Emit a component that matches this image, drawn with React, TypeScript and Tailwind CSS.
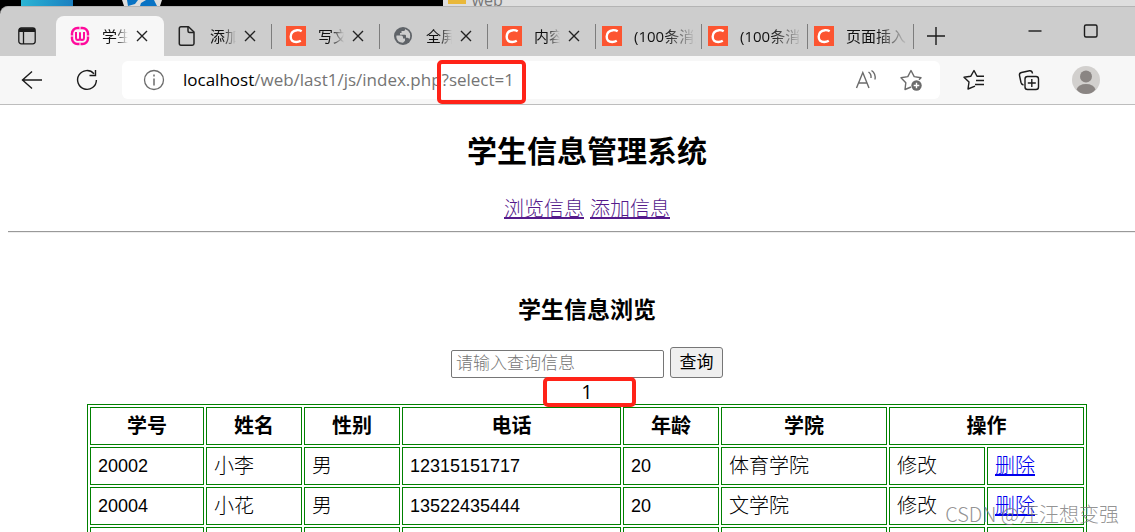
import type { ReactNode } from 'react'

type Icon = 'wamp' | 'file' | 'csdn' | 'globe'

const tabs: { title: string; icon: Icon; active?: boolean; wide?: boolean }[] = [
  { title: '学生信息', icon: 'wamp', active: true },
  { title: '添加信息', icon: 'file' },
  { title: '写文章', icon: 'csdn' },
  { title: '全屏显示', icon: 'globe' },
  { title: '内容管理', icon: 'csdn' },
  { title: '(100条消息', icon: 'csdn', wide: true },
  { title: '(100条消息', icon: 'csdn', wide: true },
  { title: '页面插入', icon: 'csdn', wide: true },
]

const students = [
  { id: '20002', name: '小李', sex: '男', phone: '12315151717', age: '20', college: '体育学院' },
  { id: '20004', name: '小花', sex: '男', phone: '13522435444', age: '20', college: '文学院' },
]

function TabIcon({ icon }: { icon: Icon }) {
  if (icon === 'wamp') {
    return (
      <svg className="size-5 shrink-0" viewBox="0 0 20 20" fill="none" stroke="#ff0a9c" strokeLinejoin="round">
        <rect x="2" y="2" width="16" height="16" rx="5.5" strokeWidth="2.4" />
        <path d="M6 6v5.5Q6 14 8 14t2-2.500V7v4.500Q10 14 12 14t2-2.500V6" strokeWidth="2" />
        <path d="M10 0v3.500M10 16.500V20M0 10h3.500M16.500 10H20" stroke="#f7f7f7" strokeWidth="1" />
      </svg>
    )
  }
  if (icon === 'file') {
    return (
      <svg className="size-5 shrink-0" viewBox="0 0 20 20" fill="none" stroke="#222" strokeWidth="1.5" strokeLinejoin="round">
        <path d="M3 .8h7.500L16 6v11.500q0 1.700-1.700 1.700H3q-1.700 0-1.700-1.700v-15Q1.300.8 3 .8Z" />
        <path d="M10 1v4q0 1.500 1.500 1.500H16" />
      </svg>
    )
  }
  if (icon === 'globe') {
    return (
      <svg className="size-5 shrink-0" viewBox="0 0 20 20">
        <circle cx="9" cy="10" r="9" fill="#5f6368" />
        <path
          d="M2.500 9.500h4.800q1.700.2 1.700 1.800v1.200h2v2.200l-2 2Q3 16.800 2.300 11ZM11 3q.5 1.500-1 2H7.500v2H6v1.800h5q1 0 1 1v2h1.500q1.500.4 1.700 1.600Q16.800 11 16 7.500 14.700 4.300 11 3Z"
          fill="#cdcdcd"
        />
      </svg>
    )
  }
  return (
    <svg className="size-5 shrink-0" viewBox="0 0 20 20" fill="none">
      <rect width="20" height="20" fill="#fc5531" />
      <path d="M15.700 5.300Q13.500 4 11 4.200 5 4.700 4.700 10.500 4.600 16 10.200 16q2.500 0 4.600-1.200" stroke="#fff" strokeWidth="2.400" />
    </svg>
  )
}

function IconButton({ label, className, children }: { label: string; className: string; children: ReactNode }) {
  return (
    <button type="button" aria-label={label} className={`flex shrink-0 items-center justify-center ${className}`}>
      <svg className="size-6" viewBox="0 0 24 24" fill="none" stroke="currentColor" strokeWidth="1.400">
        {children}
      </svg>
    </button>
  )
}

function TabStrip() {
  return (
    <div className="flex h-[50px] items-end rounded-tl-lg border-t border-[#b4b4b4] bg-[#cdcdcd]">
      <button type="button" aria-label="标签页操作" className="flex h-10 w-14 shrink-0 items-center pl-[18px]">
        <svg className="h-[18px] w-[18px]" viewBox="0 0 18 18" fill="none" stroke="#1b1b1b" strokeWidth="1.300">
          <rect x=".8" y="1" width="16.400" height="15.800" rx="2.500" />
          <path d="M1 3.800h16M1 2.600h16" strokeWidth="2.600" />
          <path d="M5.500 5v12" />
        </svg>
      </button>
      {tabs.map((tab, i) => (
        <div
          key={i}
          className={`flex h-10 shrink-0 items-center ${tab.wide ? 'w-[106px] pl-[6px]' : 'w-[108px] pl-[14px]'} ${
            tab.active ? 'rounded-t-lg bg-[#f7f7f7]' : ''
          }`}
        >
          <TabIcon icon={tab.icon} />
          <span
            className={`ml-3 overflow-hidden text-[15px] whitespace-nowrap text-[#111] [mask-image:linear-gradient(to_right,black_50%,transparent)] ${
              tab.wide ? 'w-[62px]' : 'w-[26px]'
            }`}
          >
            {tab.title}
          </span>
          {!tab.wide && (
            <button type="button" aria-label="关闭标签页" className="ml-[6px] flex size-4 items-center justify-center">
              <svg className="size-3" viewBox="0 0 12 12" stroke="#222" strokeWidth="1.400">
                <path d="M1 1l10 10M11 1L1 11" />
              </svg>
            </button>
          )}
          {!tab.active && <span className="ml-auto h-[25px] w-px bg-[#7d7d7d]" />}
        </div>
      ))}
      <IconButton label="新建标签页" className="h-10 w-11 text-[#1b1b1b]">
        <path d="M12 3v18M3 12h18" />
      </IconButton>
      <div className="ml-auto flex h-[50px] items-center">
        <IconButton label="最小化" className="w-14 text-[#1b1b1b]">
          <path d="M5.500 12h13" />
        </IconButton>
        <IconButton label="最大化" className="mr-4 w-14 text-[#1b1b1b]">
          <rect x="5.500" y="6" width="12.500" height="12" rx="1.500" />
        </IconButton>
      </div>
    </div>
  )
}

function AddressBar() {
  return (
    <div className="flex h-[49px] items-center border-b border-[#bdbdbd] bg-[#f7f7f7] text-[#1b1b1b]">
      <IconButton label="返回" className="ml-5">
        <path d="M2 12h20M12 3.500L2.500 12l9.500 8.500" />
      </IconButton>
      <IconButton label="刷新" className="ml-[31px]">
        <path d="M19 5.700A9.400 9.400 0 1 0 21.400 12M14.500 7.500h6V2" />
      </IconButton>
      <div className="ml-[23px] flex h-[38px] grow items-center rounded-md bg-white">
        <svg className="ml-5 size-6 shrink-0" viewBox="0 0 24 24" fill="none" stroke="#6b6b6b" strokeWidth="1.300">
          <circle cx="12" cy="12" r="9.500" />
          <path d="M12 10.500v7M12 6.500v2" strokeWidth="1.500" />
        </svg>
        <span className="ml-[17px] grow text-[17px] leading-6 text-[#747474]">
          <span className="text-black">localhost</span>/web/last1/js/index.php?select=1
        </span>
        <IconButton label="大声朗读" className="text-[#6b6b6b]">
          <path d="M2.500 20L8.800 4.500 15 20M4.600 15h8.300M14.500 4q3 2 2.500 6M17.500 2.500q4.500 3 3.500 9" />
        </IconButton>
        <IconButton label="收藏此页" className="mr-[17px] ml-[21px] text-[#6b6b6b]">
          <path d="M12 19L6 21.500l.8-6.700L2 9.800l6.800-1.200L12 2.500l3.200 6.100L22 9.800l-2 2" strokeLinejoin="round" />
          <circle cx="17.500" cy="17.500" r="5.200" fill="#6b6b6b" stroke="none" />
          <path d="M17.500 14.700v5.600M14.700 17.500h5.600" stroke="#fff" />
        </IconButton>
      </div>
      <IconButton label="收藏夹" className="ml-[22px]">
        <path d="M13 18.200L6 21l1-7-5-4.800L8.700 8.300 12 2.500l3 5.800h7M14 12.500h8M13 16.500h9" strokeLinejoin="round" />
      </IconButton>
      <IconButton label="集锦" className="ml-[31px]">
        <rect x="8" y="8.500" width="13.500" height="13" rx="2.500" />
        <path d="M6.500 17Q4.500 16.500 4 14.500L2.500 7.500Q2 5 4.500 4.500l8-1.700Q15 2.500 15.500 5.500M14.800 11v8M10.800 15h8" />
      </IconButton>
      <button type="button" aria-label="个人资料" className="mr-[35px] ml-[31px] shrink-0">
        <svg className="size-7" viewBox="0 0 28 28">
          <circle cx="14" cy="14" r="14" fill="#d2d0ce" />
          <circle cx="14" cy="10.500" r="6" fill="#8a8583" />
          <path d="M4.500 23.500Q6.500 18 14 18t9.500 5.500Q20 28 14 28t-9.500-4.500Z" fill="#8a8583" />
        </svg>
      </button>
    </div>
  )
}

function StudentTable() {
  const cell = 'h-[38px] border border-[#008000] px-[7px] py-0'
  return (
    <table className="w-[1000px] table-fixed border-separate border-spacing-[2px] border border-[#008000] text-left text-xl">
      <colgroup>
        <col className="w-[114px]" />
        <col className="w-[96px]" />
        <col className="w-[96px]" />
        <col className="w-[219px]" />
        <col className="w-[96px]" />
        <col className="w-[166px]" />
        <col className="w-[96px]" />
        <col />
      </colgroup>
      <thead>
        <tr>
          {['学号', '姓名', '性别', '电话', '年龄', '学院'].map((head) => (
            <th key={head} className={`${cell} text-center leading-6`}>{head}</th>
          ))}
          <th colSpan={2} className={`${cell} text-center leading-6`}>操作</th>
        </tr>
      </thead>
      <tbody className="leading-6 font-light">
        {students.map((s) => (
          <tr key={s.id}>
            <td className={`${cell} text-lg`}>{s.id}</td>
            <td className={cell}>{s.name}</td>
            <td className={cell}>{s.sex}</td>
            <td className={`${cell} text-lg`}>{s.phone}</td>
            <td className={`${cell} text-lg`}>{s.age}</td>
            <td className={cell}>{s.college}</td>
            <td className={cell}>修改</td>
            <td className={cell}>
              <a href="#delete" className="text-[#0000ee] underline">删除</a>
            </td>
          </tr>
        ))}
        <tr>
          {Array.from({ length: 8 }, (_, i) => (
            <td key={i} className={cell} />
          ))}
        </tr>
      </tbody>
    </table>
  )
}

export default function App() {
  return (
    <div className="relative h-screen overflow-hidden bg-white font-['Liberation_Sans','Noto_Sans_CJK_SC',sans-serif] text-black">
      <header className="relative bg-black font-['Open_Sans','Noto_Sans_CJK_SC',sans-serif]">
        {/* Sliver of the desktop above the browser */}
        <div className="flex h-[6px] overflow-hidden">
          <div className="ml-[21px] w-[52px] bg-gradient-to-r from-[#2bb5d4] to-[#1b7fc0]" />
          <svg className="ml-[49px] h-[6px] w-10" viewBox="0 0 40 6">
            <path d="M0 0h40l-2 6H2Z" fill="#ddd" />
            <path d="M5 0h11l-3 4-7 2ZM19 3l5-3h8l3 6H18Z" fill="#0873c4" />
          </svg>
          <div className="ml-auto flex w-[61%] bg-[#dedede]">
            <span className="ml-[5px] h-1 w-[18px] bg-[#e9b83a]" />
            <span className="ml-[6px] text-base leading-[0px] text-[#777]">web</span>
          </div>
        </div>
        <TabStrip />
        <AddressBar />
        <span className="absolute top-[60px] left-[437px] h-11 w-[89px] rounded-[5px] border-4 border-[#ff2318]" />
      </header>

      <main>
        <div className="flex flex-col items-center pt-6 pl-[39px]">
          <h1 className="text-3xl leading-[46px] font-bold">学生信息管理系统</h1>
          <nav className="mt-[18px] flex gap-[6px] text-xl leading-8 font-light text-[#551a8b] underline">
            <a href="#list">浏览信息</a>
            <a href="#add">添加信息</a>
          </nav>
        </div>
        <hr className="mt-[6px] ml-2 h-[2px] border-t border-b border-t-[#999] border-b-[#eee]" />
        <div className="flex flex-col items-center pt-[61px] pl-[39px]">
          <h2 className="text-[23px] leading-8 font-bold">学生信息浏览</h2>
          <form className="mt-[21px] flex items-end gap-[6px] text-[17px]">
            <input
              type="text"
              aria-label="查询信息"
              placeholder="请输入查询信息"
              className="h-7 w-[213px] rounded-xs border border-[#767676] px-1 font-light placeholder:text-[#757575]"
            />
            <button type="button" className="h-[31px] w-[53px] rounded-[3px] border border-[#767676] bg-[#efefef]">
              查询
            </button>
          </form>
          <p className="relative h-[26px] font-['Open_Sans',sans-serif] text-xl leading-[27px]">
            1
            <span className="absolute -top-px left-1/2 h-[30px] w-[93px] -translate-x-[44px] rounded-[5px] border-4 border-[#ff2318]" />
          </p>
          <StudentTable />
        </div>
      </main>

      <span className="absolute right-4 bottom-1 font-['Noto_Sans_CJK_SC',sans-serif] text-xl leading-7 font-light text-[#777]/80">
        CSDN @汪汪想变强
      </span>
    </div>
  )
}
